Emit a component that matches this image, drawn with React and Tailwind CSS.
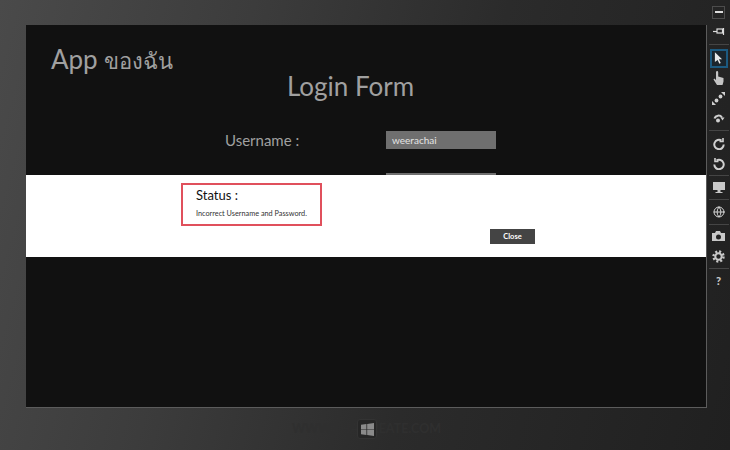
import React from "react";
import { Globe } from "lucide-react";

const F = { fontFamily: 'Lato,"Noto Sans",sans-serif' };

function Slot({ children, active }) {
  return (
    <div className="h-[20px] w-full flex items-center justify-center text-[#d4d4d4]">
      {active ? (
        <div className="w-[18px] h-[19px] border-2 border-[#1c5a80] bg-[#1b252c] flex items-center justify-center">{children}</div>
      ) : children}
    </div>
  );
}
const Sep = ({ h }) => (
  <div className="w-full flex items-center justify-center" style={{ height: h }}>
    <div className="w-[20px] h-px bg-[#454545]" />
  </div>
);
const Arc = ({ flip }) => (
  <svg width="12" height="13" viewBox="0 0 12 13" fill="none" stroke="#d0d0d0" strokeWidth="2" className={flip ? "" : "-scale-x-100"}>
    <path d="M3.5 3.5A4.7 4.7 0 1 1 1.3 7.5" />
    <path d="M2 1v3.5h3.5" strokeWidth="1.6" />
  </svg>
);

function Toolbar() {
  return (
    <div className="w-[23px] flex flex-col items-center pt-[2px]">
      <Slot>
        <div className="w-[13px] h-[13px] border border-[#4c4c4c] flex items-center justify-center">
          <div className="w-[8px] h-[2px] bg-[#dcdcdc]" />
        </div>
      </Slot>
      <div className="h-[19px] w-full flex items-center justify-center">
        <svg width="12" height="7" viewBox="0 0 12 7" fill="none" stroke="#dcdcdc" strokeWidth="1.2"><path d="M0 3.5h4" /><rect x="4" y="1" width="5.5" height="4" /><path d="M10.5 0v7" /></svg>
      </div>
      <Sep h={7} />
      <Slot active><svg width="9" height="12" viewBox="0 0 10 13" fill="#e8e8e8"><path d="M1 0l8 8H5.5l2 4-1.5.8-2-4.2L1 11z" /></svg></Slot>
      <Slot><svg width="11" height="14" viewBox="0 0 11 14" fill="#c4c4c4"><path d="M3 1.2a1.1 1.1 0 0 1 2.2 0V5.5L10.5 7v3.5L9.5 14H4L0.5 8.5l.8-.9L3 9z" /></svg></Slot>
      <Slot><svg width="13" height="13" viewBox="0 0 13 13" fill="#cfcfcf"><path d="M0 13V9l4 4zM13 0v4L9 0z" /><circle cx="4.5" cy="8.5" r="1.9" /><circle cx="8.5" cy="4.5" r="1.9" /></svg></Slot>
      <Slot><svg width="12" height="10" viewBox="0 0 12 10" fill="none" stroke="#cfcfcf" strokeWidth="2"><path d="M1.5 5.5A4.2 4.2 0 0 1 9 4.5" /><path d="M7.5 4.5h4l-2 3z" fill="#cfcfcf" stroke="none" /><circle cx="5" cy="7.5" r="2" fill="#cfcfcf" stroke="none" /></svg></Slot>
      <Sep h={5} />
      <Slot><Arc /></Slot>
      <Slot><Arc flip /></Slot>
      <Sep h={4} />
      <Slot><svg width="12" height="11" viewBox="0 0 12 11" fill="#c8c8c8"><path d="M0 0h12v8H0zM4.5 8h3v2h2v1h-7v-1h2z" /></svg></Slot>
      <Sep h={5} />
      <Slot><Globe size={12} strokeWidth={2} /></Slot>
      <Sep h={4} />
      <Slot><svg width="13" height="10" viewBox="0 0 13 10" fill="#c8c8c8"><path fillRule="evenodd" d="M0 2h3l1-2h4l1 2h4v8H0zM6.5 3.5a2.5 2.5 0 1 0 0 5 2.5 2.5 0 0 0 0-5z" /></svg></Slot>
      <Slot><svg width="13" height="13" viewBox="0 0 13 13" fill="none" stroke="#c8c8c8"><circle cx="6.5" cy="6.5" r="3.2" strokeWidth="2" /><circle cx="6.5" cy="6.5" r="5" strokeWidth="2.4" strokeDasharray="2 1.93" /></svg></Slot>
      <Sep h={4} />
      <Slot><span className="text-[11px] leading-[13px] font-black text-[#c8c8c8]">?</span></Slot>
    </div>
  );
}

export default function App() {
  return (
    <div style={F} className="w-[730px] h-[450px] overflow-hidden bg-[linear-gradient(105deg,#4a4a4a_0%,#3c3c3c_30%,#2b2b2b_60%,#202020_100%)] flex">
      <div className="w-[707px] flex flex-col pt-[25px] pl-[26px]">
        <div className="relative w-[681px] h-[383px] shrink-0 bg-[#111111] border-r border-b border-[#5c5c5c] flex flex-col">
          <div className="h-[34px] leading-[34px] text-[#a0a0a0] ml-[25px] mt-[17px] text-[26px]">App <span className="text-[22px]">ของฉัน</span></div>
          <div className="text-[26px] leading-[34px] text-[#a0a0a0] w-[649px] text-center -mt-[7px]">Login Form</div>
          <div className="flex items-center h-[18px] mt-[28px]">
            <div className="w-[360px] pl-[199px] text-[15px] leading-[20px] text-[#a0a0a0]">Username :</div>
            <div className="w-[110px] h-[18px] bg-[#6f6f6f] text-[#e4e4e4] text-[10px] leading-[19px] pl-[6px]">weerachai</div>
          </div>
          <div className="w-[110px] h-[18px] bg-[#6f6f6f] ml-[360px] mt-[24px]" />
          <div className="absolute left-0 right-0 top-[150px] h-[82px] bg-white">
            <div className="absolute left-[155px] top-[8px] w-[141px] h-[43px] border-2 border-[#e0505c] pl-[13px] text-[#111]">
              <div className="text-[13px] leading-[18px] mt-[1px]">Status :</div>
              <div className="text-[7.3px] leading-[10px] mt-[5px] text-[#333]">Incorrect Username and Password.</div>
            </div>
            <div className="absolute left-[464px] top-[54px] w-[45px] h-[15px] bg-[#444] text-white text-[7.5px] leading-[15px] font-bold text-center">Close</div>
          </div>
        </div>
        <div className="relative flex-1 flex items-center justify-center">
          <div className="text-[12.5px] text-[#2f2f2f] font-bold">WWW.THAICREATE.COM</div>
          <div className="absolute left-[331px] top-[11px] w-[20px] h-[20px] rounded-[3px] border border-[#333] bg-[#262626] flex items-center justify-center">
            <svg width="13" height="13" viewBox="0 0 12 12" fill="#8a8a8a"><path d="M0 1.7L5 1v4.7H0zM5.7 0.9L12 0v5.7H5.7zM0 6.3h5V11l-5-.7zM5.7 6.3H12V12l-6.3-.9z" /></svg>
          </div>
        </div>
      </div>
      <Toolbar />
    </div>
  );
}
